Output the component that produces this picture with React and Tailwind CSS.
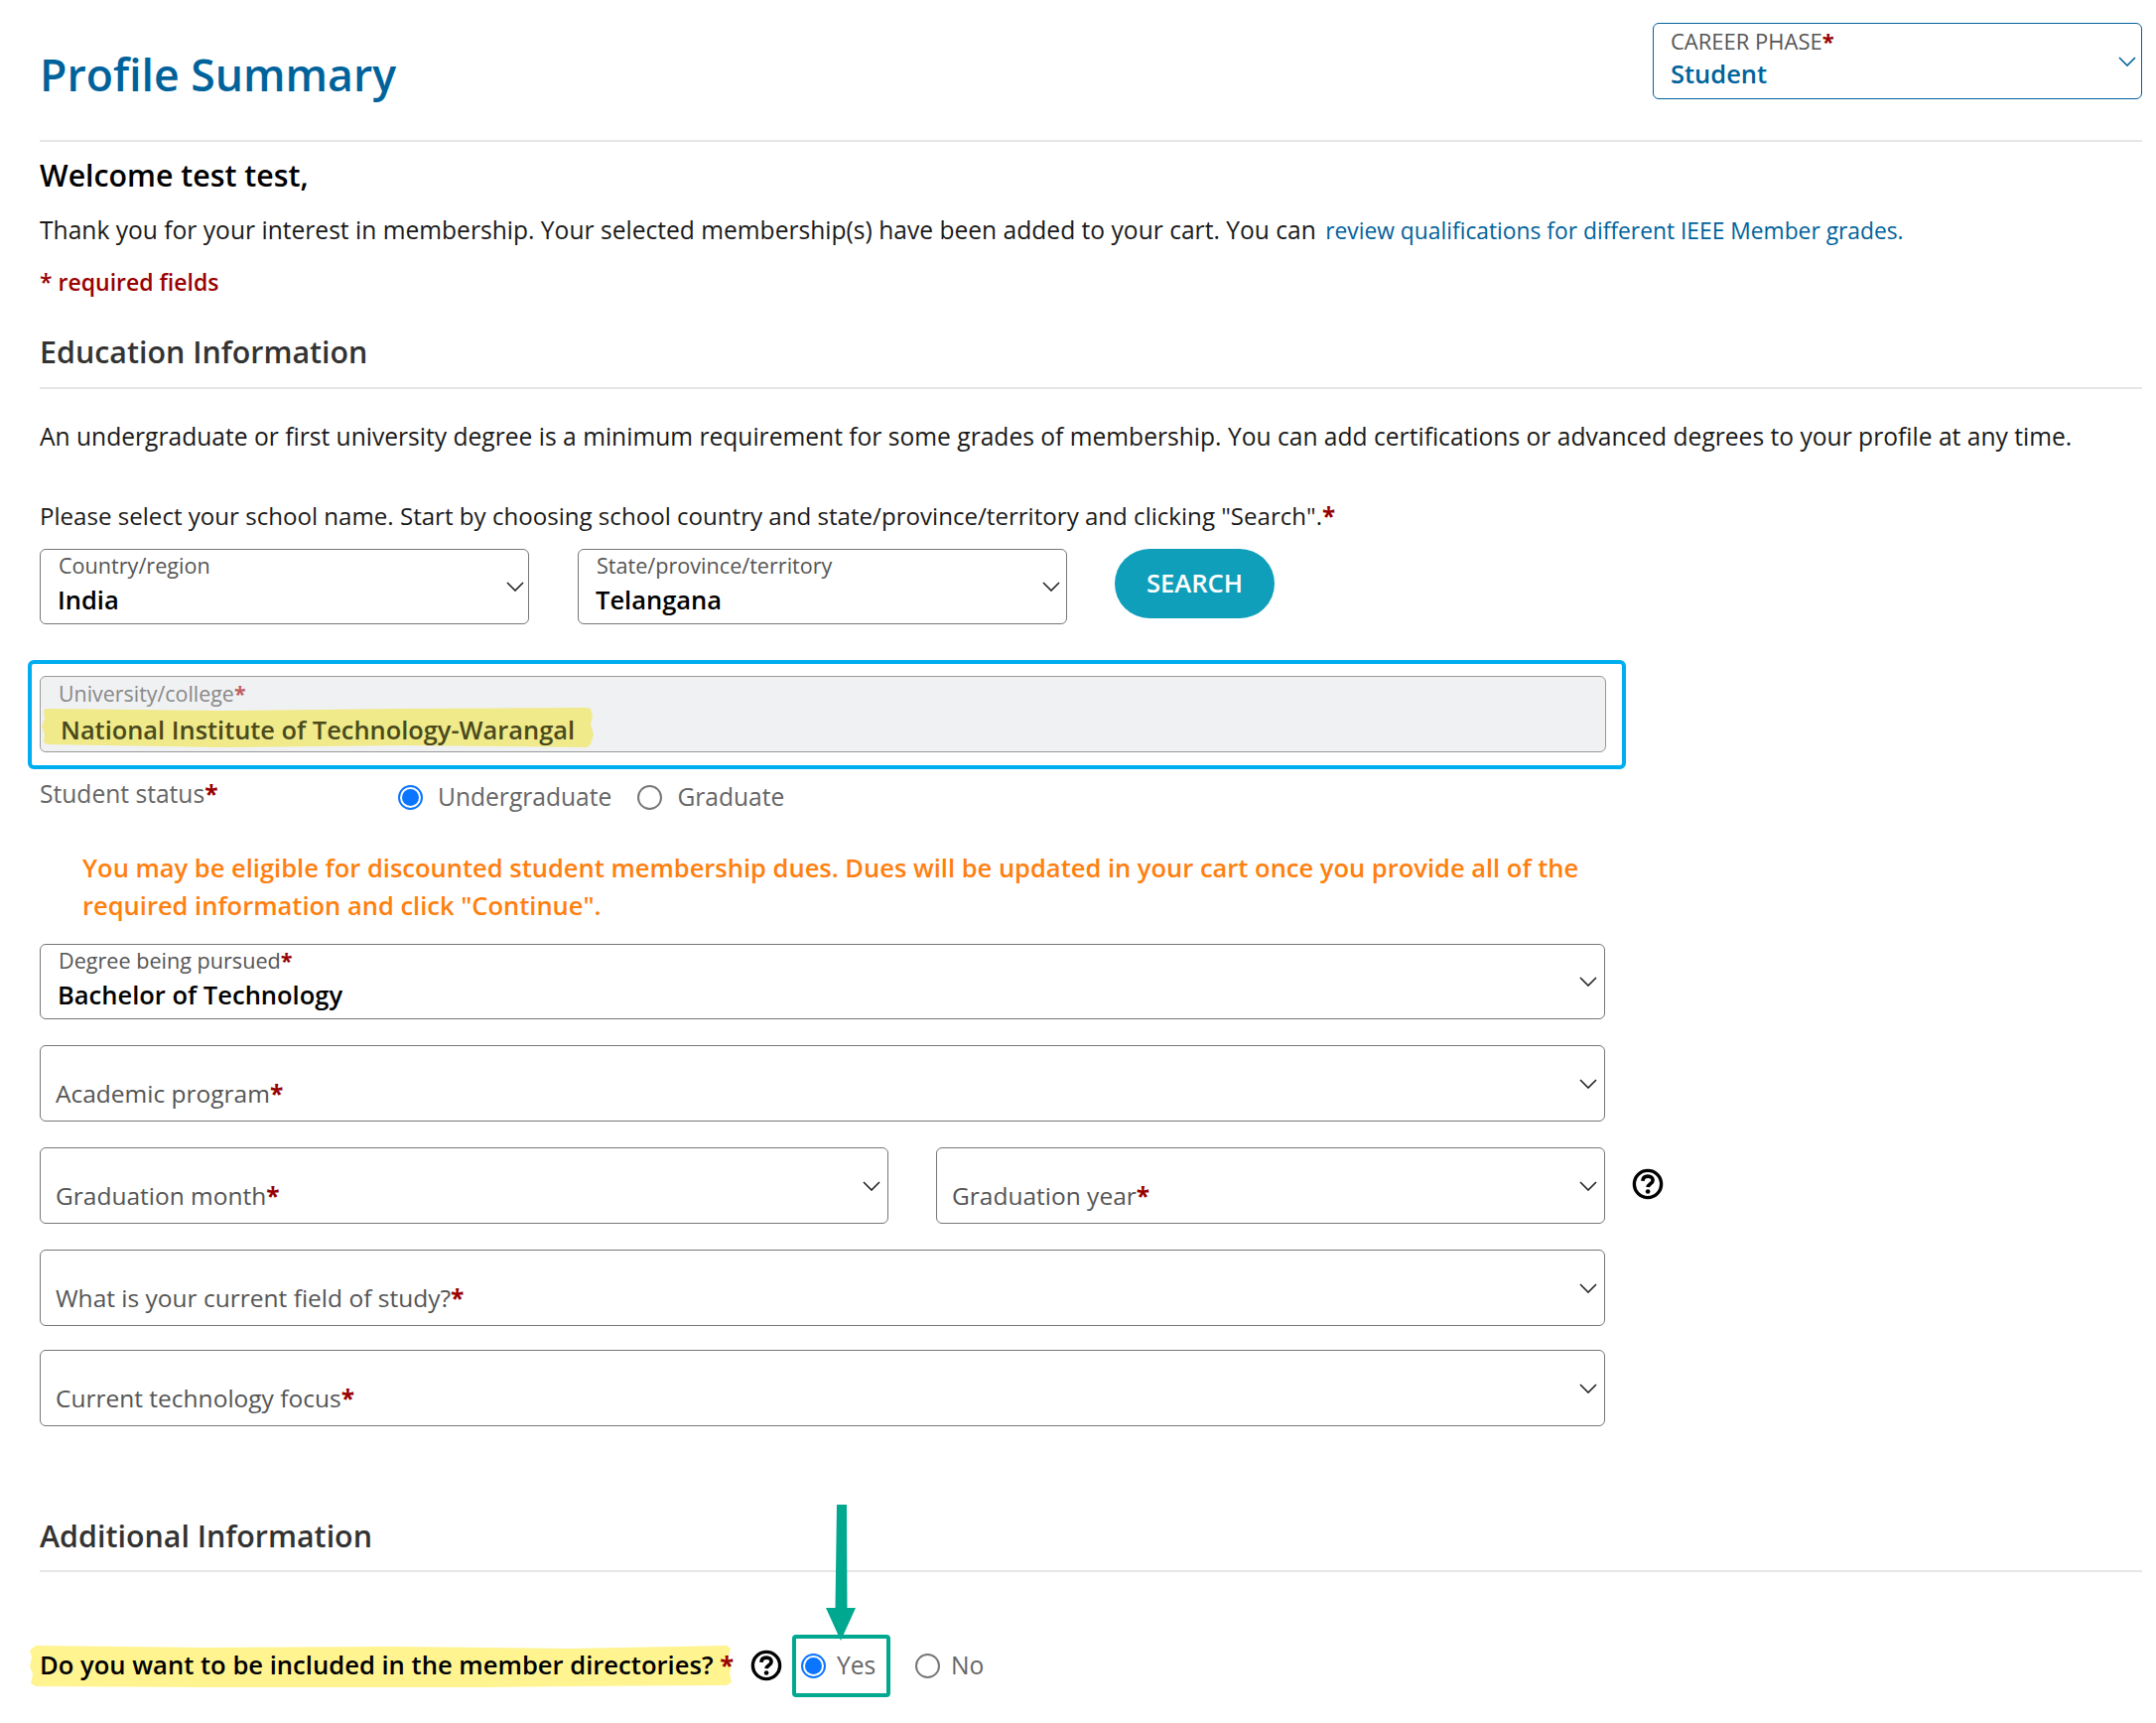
import React from "react";

function Chevron({ className = "text-[#222]" }) {
  return (
    <svg width="18" height="10" viewBox="0 0 18 10" className={className}>
      <path d="M1 1l8 8 8-8" fill="none" stroke="currentColor" strokeWidth="1.6" />
    </svg>
  );
}

function HelpIcon() {
  return (
    <svg width="32" height="32" viewBox="0 0 32 32" className="block text-black">
      <circle cx="16" cy="16" r="13.6" fill="none" stroke="currentColor" strokeWidth="3.4" />
      <path d="M10.9 12.8c.2-3 2.4-4.700 5.200-4.700 3 0 5 1.700 5 4.100 0 3.500-4.800 3.500-5 7" fill="none" stroke="currentColor" strokeWidth="3.600" />
      <circle cx="16.100" cy="23.500" r="2.300" fill="currentColor" />
    </svg>
  );
}

function Star() {
  return <span className="font-bold text-[#990000]">*</span>;
}

function Radio({ checked }) {
  return checked ? (
    <span className="flex h-[25px] w-[25px] shrink-0 items-center justify-center rounded-full border-2 border-[#0a75ff]">
      <span className="h-[17px] w-[17px] rounded-full bg-[#0a75ff]" />
    </span>
  ) : (
    <span className="block h-[25px] w-[25px] shrink-0 rounded-full border-2 border-[#777]" />
  );
}

// filled select with a small floating label
function FilledSelect({ label, value, star, className = "", chevron = "right-[7px]" }) {
  return (
    <div className={`relative h-[76px] rounded-[6px] border border-[#777] bg-white pl-[18px] ${className}`}>
      <div className="pt-[1px] text-[21.6px] leading-[30px] text-[#555]">
        {label}
        {star && <Star />}
      </div>
      <div className="-ml-[1px] mt-[1px] text-[25.5px] leading-[36px] font-semibold text-black">{value}</div>
      <div className={`absolute top-[32px] ${chevron}`}>
        <Chevron />
      </div>
    </div>
  );
}

function EmptySelect({ label, className = "" }) {
  return (
    <div className={`relative h-[77px] rounded-[6px] border border-[#777] bg-white pl-[15px] ${className}`}>
      <div className="pt-[30px] text-[24.5px] leading-[36px] text-[#555]">
        {label}
        <Star />
      </div>
      <div className="absolute top-[33px] right-[7px]">
        <Chevron />
      </div>
    </div>
  );
}

export default function App() {
  return (
    <div className="relative min-h-[1736px] overflow-hidden bg-white pr-[14px] pl-[40px] font-['Open_Sans',sans-serif] text-black">
      {/* header */}
      <div className="flex h-[143px] justify-between border-b-2 border-[#e6e6e6]">
        <h1 className="pt-[44px] text-[44.6px] leading-[62px] font-semibold text-[#00629b]">Profile Summary</h1>
        <div className="relative mt-[23px] h-[77px] w-[493px] rounded-[6px] border border-[#00629b] pl-[17px]">
          <div className="pt-[2px] text-[22px] leading-[30px] text-[#555]">
            CAREER PHASE
            <Star />
          </div>
          <div className="text-[25.5px] leading-[36px] font-semibold text-[#00629b]">Student</div>
          <div className="absolute top-[33px] right-[5px]">
            <Chevron className="text-[#00629b]" />
          </div>
        </div>
      </div>

      <div className="mt-[13px] text-[30.3px] leading-[42px] font-semibold">Welcome test test,</div>
      <p className="mt-[16px] text-[24.6px] leading-[36px] text-[#1a1a1a]">
        Thank you for your interest in membership. Your selected membership(s) have been added to your cart. You can{" "}
        <a className="ml-[3px] text-[22.8px] text-[#00629b]">review qualifications for different IEEE Member grades.</a>
      </p>
      <div className="mt-[17px] text-[23px] leading-[32px] font-semibold text-[#990000]">* required fields</div>

      <h2 className="mt-[34px] text-[30.4px] leading-[42px] font-semibold text-[#333]">Education Information</h2>
      <div className="mt-[14px] border-b-2 border-[#e6e6e6]" />

      <p className="mt-[30px] text-[24.6px] leading-[36px] whitespace-nowrap text-[#1a1a1a]">
        An undergraduate or first university degree is a minimum requirement for some grades of membership. You can add certifications or advanced degrees to your profile at any time.
      </p>
      <p className="mt-[44px] text-[24.1px] leading-[36px] text-[#1a1a1a]">
        Please select your school name. Start by choosing school country and state/province/territory and clicking "Search".
        <Star />
      </p>

      <div className="mt-[15px] flex items-start">
        <FilledSelect label="Country/region" value="India" className="w-[493px]" chevron="right-[4px]" />
        <FilledSelect label="State/province/territory" value="Telangana" className="ml-[49px] w-[493px]" chevron="right-[6px]" />
        <button className="ml-[48px] h-[70px] w-[161px] rounded-full bg-[#0f9fbb] text-[25.6px] font-semibold text-white">SEARCH</button>
      </div>

      {/* university, boxed by the annotation */}
      <div className="mt-[36px] -ml-[12px] h-[110px] w-[1610px] rounded-[6px] border-4 border-[#00aeef] pt-[12px] pl-[8px]">
        <div className="relative h-[77px] w-[1578px] rounded-[6px] border border-[#999] bg-[#f0f1f3] pl-[18px]">
          <svg width="556" height="43" viewBox="0 0 556 43" className="absolute top-[29px] left-[1px]">
            <path d="M4 3l180 2 180-2 184-1 5 1 2 8-2 8 3 10-3 10-4 3-184-2-180 2L6 39l-4-2 1-8-3-8 3-8-1-8z" fill="#f0ea8a" />
          </svg>
          <div className="pt-[2px] text-[21.4px] leading-[30px] text-[#888]">
            University/college
            <span className="font-bold text-[#c06060]">*</span>
          </div>
          <div className="relative mt-[3px] ml-[2px] text-[25.4px] leading-[36px] font-semibold text-[#4a4a1c]">National Institute of Technology-Warangal</div>
        </div>
      </div>

      {/* student status */}
      <div className="mt-[8px] flex h-[40px] items-center text-[24.6px] text-[#666]">
        <div className="w-[361px] -translate-y-[3px]">
          Student status
          <Star />
        </div>
        <Radio checked />
        <span className="ml-[15px]">Undergraduate</span>
        <span className="ml-[26px]">
          <Radio />
        </span>
        <span className="ml-[15px]">Graduate</span>
      </div>

      <p className="mt-[32px] ml-[43px] w-[1530px] text-[25.5px] leading-[38px] font-semibold text-[#ff7f0f]">
        You may be eligible for discounted student membership dues. Dues will be updated in your cart once you provide all of the required information and click "Continue".
      </p>

      <div className="mt-[20px] w-[1577px]">
        <FilledSelect label="Degree being pursued" value="Bachelor of Technology" star />
        <EmptySelect label="Academic program" className="mt-[26px]" />
        <div className="relative mt-[26px] flex gap-[48px]">
          <EmptySelect label="Graduation month" className="w-[855px]" />
          <EmptySelect label="Graduation year" className="w-[674px]" />
          <div className="absolute top-[21px] -right-[59px]">
            <HelpIcon />
          </div>
        </div>
        <EmptySelect label="What is your current field of study?" className="mt-[26px]" />
        <EmptySelect label="Current technology focus" className="mt-[24px]" />
      </div>

      <h2 className="mt-[90px] text-[30.4px] leading-[42px] font-semibold text-[#333]">Additional Information</h2>
      <div className="mt-[13px] border-b-2 border-[#e6e6e6]" />

      {/* directories question */}
      <div className="mt-[76px] flex h-[36px] items-center">
        <div className="relative w-[716px] text-[25.6px] leading-[36px] font-semibold whitespace-nowrap">
          <svg width="708" height="44" viewBox="0 0 708 44" className="absolute -top-[4px] -left-[10px]">
            <path d="M6 2l170 2 190-1 180 2 156-3 4 3-2 8 3 9-2 8 2 9-5 3-160 1-180 2-180-1-176-1-5-3 2-9-3-8 2-9-2-7z" fill="#fff48f" />
          </svg>
          <span className="relative">
            Do you want to be included in the member directories? <Star />
          </span>
        </div>
        <HelpIcon />
        <div className="ml-[19px]">
          <Radio checked />
        </div>
        <span className="ml-[11px] w-[38px] text-[24.6px] text-[#666]">Yes</span>
        <div className="ml-[41px]">
          <Radio />
        </div>
        <span className="ml-[11px] text-[24.6px] text-[#666]">No</span>
      </div>

      {/* teal annotation */}
      <div className="absolute top-[1647px] left-[798px] h-[63px] w-[99px] rounded-[4px] border-4 border-[#00a88f]" />
      <svg width="34" height="140" viewBox="0 0 34 140" className="absolute top-[1516px] left-[830px]">
        <path d="M13 0h10l0.5 104H32L17 137 2 104h9.500z" fill="#00a88f" />
      </svg>
    </div>
  );
}
